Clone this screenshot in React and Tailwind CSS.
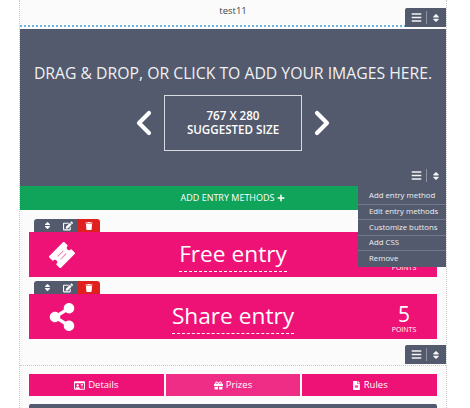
import React from 'react';
import { ChevronLeft, ChevronRight } from 'lucide-react';
import { FaBars, FaSort, FaEdit, FaTrash, FaShareAlt, FaPlus, FaRegIdCard, FaGift, FaFileAlt } from 'react-icons/fa';

const Toolbar = ({ className }) => (
  <div className={`absolute right-0 flex h-[19px] w-[41px] items-center justify-center rounded-tl-[2px] bg-[#535a6e] text-[#f4f4f4] ${className}`}>
    <FaBars size={11} />
    <span className="mx-[4px] h-[13px] w-px bg-[#8d93a3]" />
    <FaSort size={10} />
  </div>
);

const EntryTools = () => (
  <div className="ml-[5px] flex h-[13px] w-[66px] overflow-hidden rounded-t-[3px] text-white">
    <div className="flex flex-1 items-center justify-between bg-[#535a6e] pl-[9px] pr-[5px]">
      <FaSort size={9} />
      <FaEdit size={10} />
    </div>
    <div className="flex w-[22px] items-center justify-center bg-[#e0201f]">
      <FaTrash size={8} />
    </div>
  </div>
);

const Ticket = () => (
  <svg width="26" height="26" viewBox="0 0 26 26">
    <g transform="rotate(-45 13 13)">
      <path
        d="M3 5.5h20v4.5a3 3 0 0 0 0 6v4.5H3V16a3 3 0 0 0 0-6z"
        fill="#fff"
        stroke="#fff"
        strokeWidth="1.5"
        strokeLinejoin="round"
      />
      <path d="M9 11h8M9 15h8" stroke="#f27ab0" strokeWidth="1" />
    </g>
  </svg>
);

const Entry = ({ icon, title, points }) => (
  <div>
    <EntryTools />
    <div className="flex h-[45px] items-center bg-[#ee1277] text-white">
      <div className="flex w-[70px] justify-center pr-[4px]">{icon}</div>
      <div className="flex flex-1 justify-center pl-[6px]">
        <span className="border-b border-dashed border-white text-[22.7px] leading-[34px]">{title}</span>
      </div>
      <div className="flex w-[76px] flex-col items-center pl-[10px] pt-[4px]">
        <span className="text-[21px] leading-[22px]">{points}</span>
        <span className="text-[7px] leading-[10px]">POINTS</span>
      </div>
    </div>
  </div>
);

const Tab = ({ icon, label, active }) => (
  <div className={`flex h-[22px] flex-1 items-center justify-center gap-[3px] text-[9.5px] text-white ${active ? 'bg-[#ef2d87]' : 'bg-[#ee1277]'}`}>
    {icon}
    {label}
  </div>
);

const menuItems = ['Add entry method', 'Edit entry methods', 'Customize buttons', 'Add CSS', 'Remove'];

export default function App() {
  return (
    <div className="h-[408px] w-[470px] overflow-hidden bg-white font-['Open_Sans',sans-serif]">
      <div className="relative ml-[19px] h-[408px] w-[428px] border-x border-dotted border-[#c9c9c9] bg-[#fbfbfb]">
        {/* title */}
        <div className="flex h-[27px] items-start justify-center border-b-2 border-dotted border-[#6db3dc] pt-[3px] text-[9.5px] leading-[15px] text-[#444]">
          test11
        </div>
        <Toolbar className="top-[8px]" />

        {/* image upload */}
        <div className="mt-[2px] flex h-[157px] flex-col items-center bg-[#535a6e] pt-[34px] text-white">
          <div className="whitespace-nowrap text-[15.75px] leading-[20px] text-[#f1f1f1]">DRAG &amp; DROP, OR CLICK TO ADD YOUR IMAGES HERE.</div>
          <div className="mt-[12px] flex items-center">
            <ChevronLeft size={40} strokeWidth={2.5} />
            <div className="flex h-[56px] w-[138px] flex-col items-center justify-center border border-[#d8dae0] text-[11.6px] font-semibold leading-[14px]">
              <span>767 X 280</span>
              <span>SUGGESTED SIZE</span>
            </div>
            <ChevronRight size={40} strokeWidth={2.5} />
          </div>
        </div>
        <Toolbar className="top-[165px] h-[21px]" />

        {/* add entry */}
        <div className="flex h-[24px] items-center justify-center gap-[3px] bg-[#10a35a] text-[9px] font-medium text-white">
          ADD ENTRY METHODS <FaPlus size={8} />
        </div>

        {/* entries */}
        <div className="ml-[9px] mr-[9px] mt-[9px] flex flex-col gap-[4px]">
          <Entry icon={<Ticket />} title="Free entry" points="5" />
          <Entry icon={<FaShareAlt size={28} />} title="Share entry" points="5" />
        </div>

        <Toolbar className="top-[345px]" />
        <div className="mt-[26px] border-b border-dotted border-[#c9c9c9]" />

        {/* tabs */}
        <div className="mx-[9px] mt-[8px] flex gap-[2px]">
          <Tab icon={<FaRegIdCard size={11} />} label="Details" />
          <Tab icon={<FaGift size={9} />} label="Prizes" active />
          <Tab icon={<FaFileAlt size={9} />} label="Rules" />
        </div>
        <div className="mx-[9px] mt-[8px] h-[10px] rounded-t-[2px] bg-[#535a6e]" />

        {/* dropdown */}
        <div className="absolute right-0 top-[186px] w-[88px] bg-[#535a6e] pt-[3px] text-[7.8px] font-medium text-[#f0f0f0]">
          {menuItems.map((item) => (
            <div key={item} className="flex h-[15.6px] items-center border-b border-[#727889] pl-[11px] last:border-b-0">
              {item}
            </div>
          ))}
        </div>
      </div>
    </div>
  );
}
